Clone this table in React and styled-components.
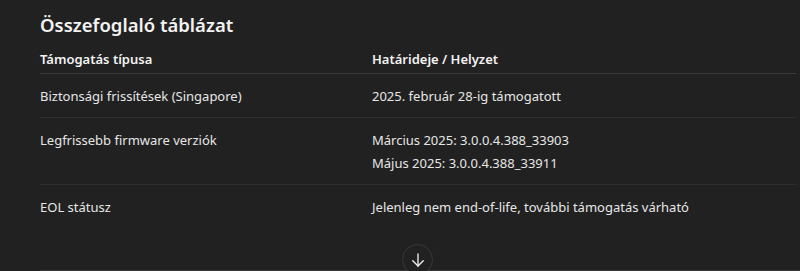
import React from "react";
import styled, { createGlobalStyle } from "styled-components";

const Global = createGlobalStyle`
  html, body { margin: 0; padding: 0; background: #212121; }
  body { font-family: "Noto Sans", "Open Sans", sans-serif; color: #ececec; }
`;

const Page = styled.div`
  position: relative;
  height: 271px;
  overflow: hidden;
  padding: 0 4px 0 40px;
  box-sizing: border-box;
`;

const Heading = styled.h3`
  margin: 0;
  padding-top: 11px;
  font-size: 18.5px;
  line-height: 28px;
  font-weight: 600;
  color: #f3f3f3;
`;

const Table = styled.table`
  width: 756px;
  border-collapse: collapse;
  margin-top: 9px;
  font-size: 13px;
  line-height: 23px;
`;

const Th = styled.th`
  text-align: left;
  font-weight: 600;
  padding: 0 0 2px 0;
  width: ${(p) => p.$w || "auto"};
  border-bottom: 1px solid #3b3b3b;
  color: #f3f3f3;
`;

const Td = styled.td`
  padding: 11px 0 9px;
  vertical-align: top;
  color: #e6e6e6;
`;

const Tr = styled.tr`
  border-bottom: 1px solid #2f2f2f;
  &:last-child { border-bottom: none; }
`;

const Line = styled.div``;

const BottomRule = styled.div`
  position: absolute;
  left: 40px;
  right: 0;
  bottom: 0;
  height: 1px;
  background: #3a3a3a;
`;

const ScrollButton = styled.button`
  position: absolute;
  left: 402px;
  top: 244px;
  width: 31px;
  height: 31px;
  border-radius: 50%;
  border: 1px solid #383838;
  background: #212121;
  padding: 0;
  display: flex;
  align-items: center;
  justify-content: center;
  color: #f0f0f0;
`;

const rows = [
  ["Biztonsági frissítések (Singapore)", ["2025. február 28-ig támogatott"]],
  ["Legfrissebb firmware verziók", ["Március 2025: 3.0.0.4.388_33903", "Május 2025: 3.0.0.4.388_33911"]],
  ["EOL státusz", ["Jelenleg nem end-of-life, további támogatás várható"]],
];

export default function App() {
  return (
    <>
      <Global />
      <Page>
        <Heading>Összefoglaló táblázat</Heading>
        <Table>
          <thead>
            <tr>
              <Th $w="332px">Támogatás típusa</Th>
              <Th>Határideje / Helyzet</Th>
            </tr>
          </thead>
          <tbody>
            {rows.map(([a, b]) => (
              <Tr key={a}>
                <Td>{a}</Td>
                <Td>
                  {b.map((l) => (
                    <Line key={l}>{l}</Line>
                  ))}
                </Td>
              </Tr>
            ))}
          </tbody>
        </Table>
        <BottomRule />
        <ScrollButton aria-label="Görgetés le">
          <svg width="18" height="18" viewBox="0 0 24 24" fill="none" stroke="currentColor" strokeWidth="1.8" strokeLinecap="round" strokeLinejoin="round">
            <path d="M12 4v16" />
            <path d="M5 13l7 7 7-7" />
          </svg>
        </ScrollButton>
      </Page>
    </>
  );
}
